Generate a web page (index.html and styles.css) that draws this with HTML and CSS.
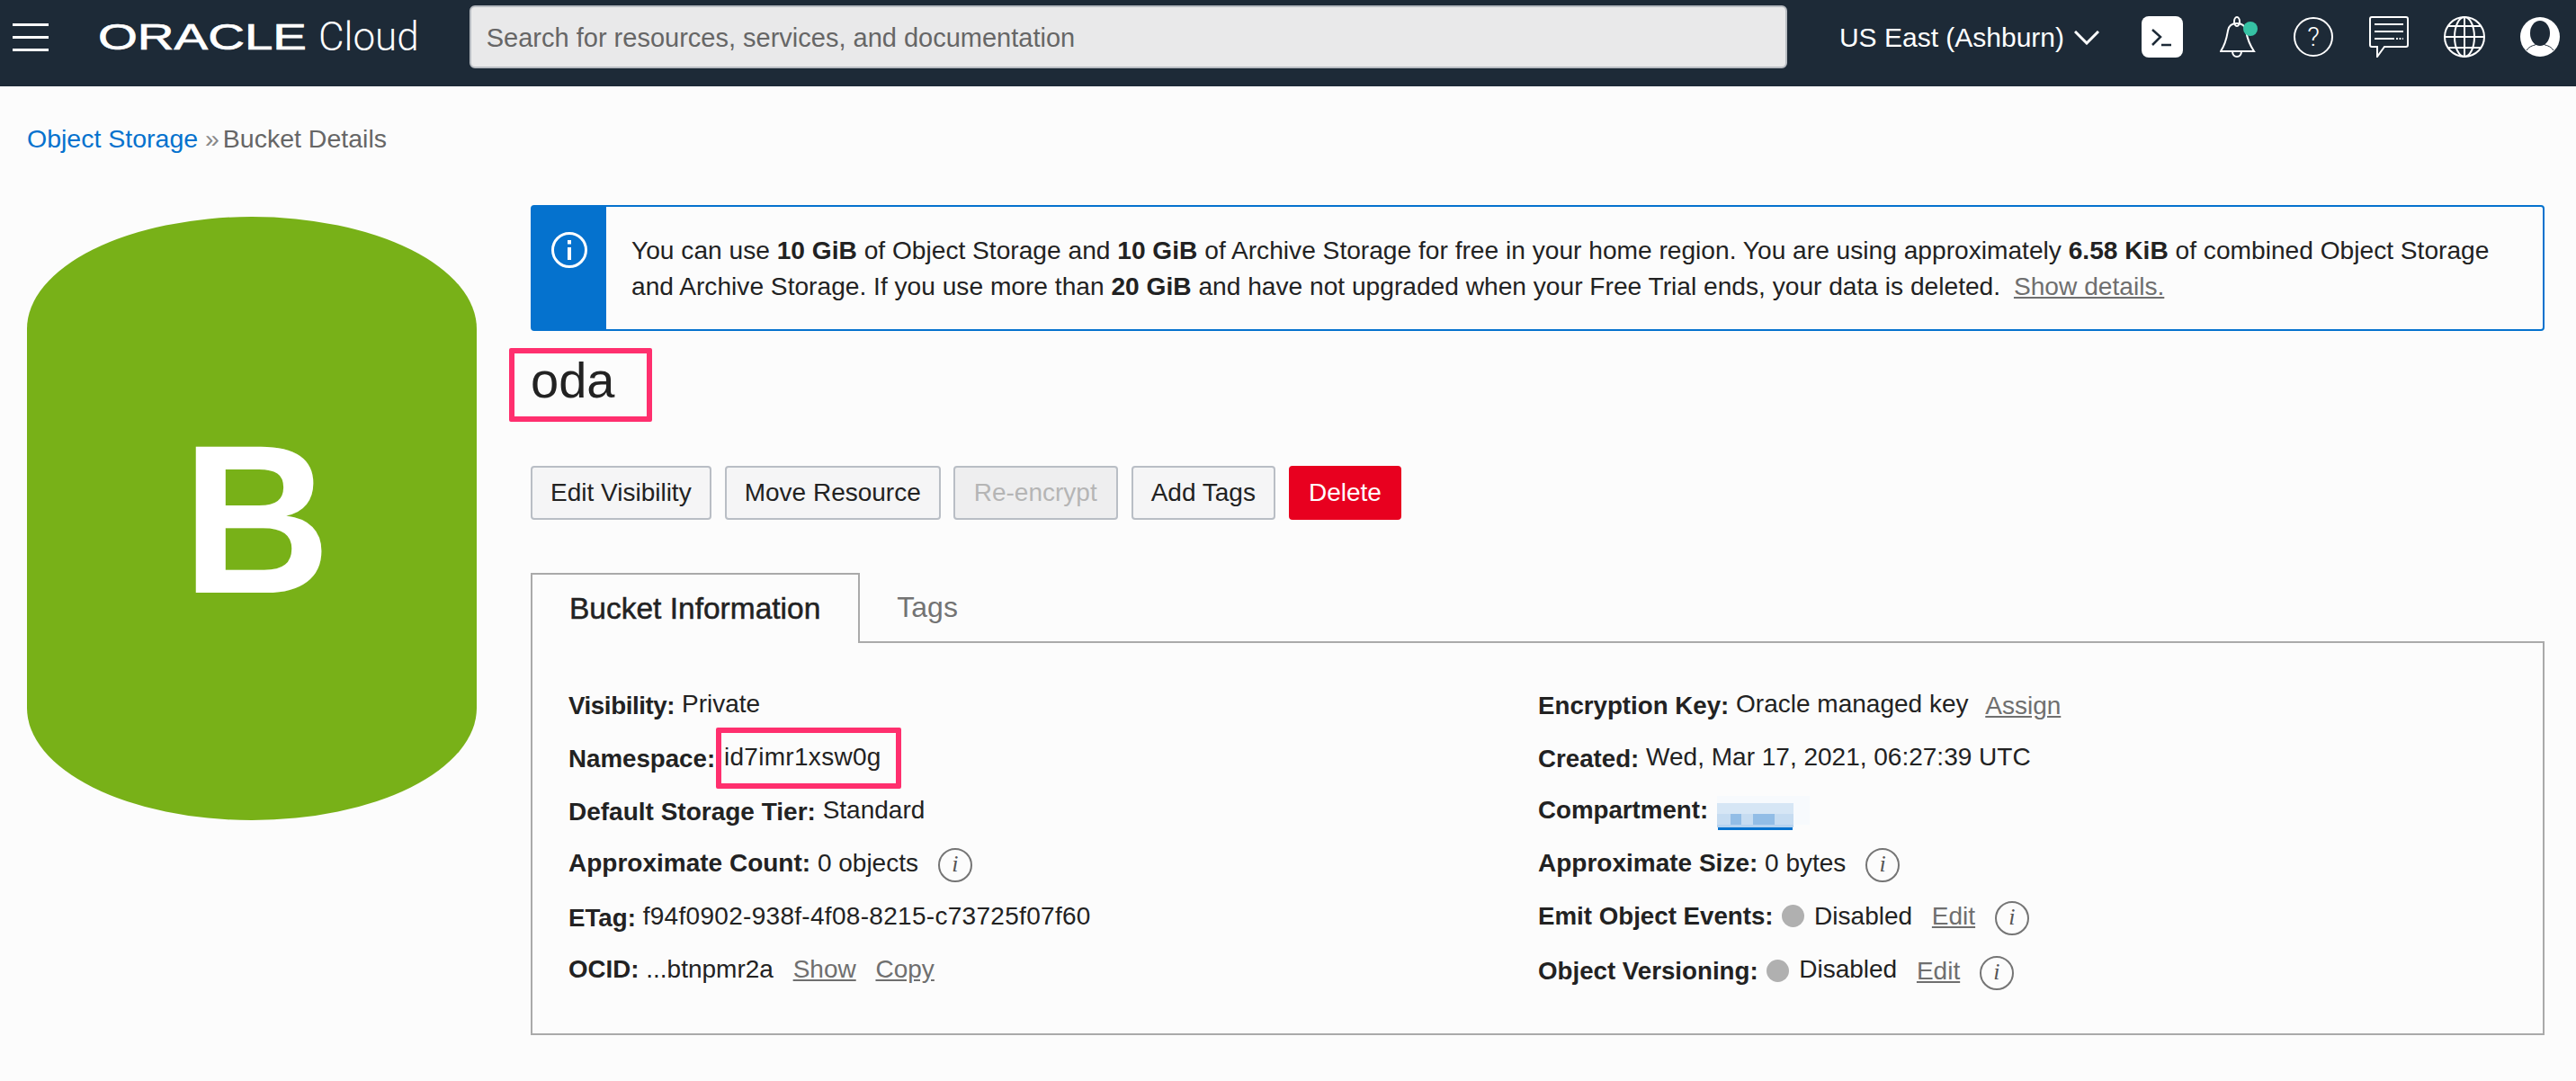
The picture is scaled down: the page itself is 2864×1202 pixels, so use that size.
FILE: index.html
```html
<!DOCTYPE html>
<html>
<head>
  <meta charset="UTF-8">
  <meta name="viewport" content="width=device-width, initial-scale=1.0">
  <title>Bucket Details</title>
  <link rel="stylesheet" href="styles.css">
</head>
<body>
  <!-- Top navigation -->
  <header class="topbar">
    <div class="burger"><span></span><span></span><span></span></div>
    <div class="brand"><span class="brand-oracle">ORACLE</span><span class="brand-cloud">Cloud</span></div>
    <div class="search">Search for resources, services, and documentation</div>
    <div class="region">US East (Ashburn)
      <svg class="chevron" width="28" height="16" viewBox="0 0 28 16"><path d="M1 1 L14 14 L27 1" fill="none" stroke="#fff" stroke-width="3"/></svg>
    </div>
    <svg class="nav-icon icon-term" width="46" height="46" viewBox="0 0 46 46">
      <rect width="46" height="46" rx="8" fill="#fff"/>
      <path d="M12 15 L21 23 L12 32 M22 32 H33" fill="none" stroke="#1d2a37" stroke-width="2.5"/>
    </svg>
    <svg class="nav-icon icon-bell" width="42" height="46" viewBox="0 0 42 46">
      <g fill="none" stroke="#fff" stroke-width="2">
        <ellipse cx="19" cy="6" rx="3" ry="5"/>
        <path d="M1 39 C7 30 8 22 9 16 C10 10 14 8 19 8 C24 8 28 10 29 16 C30 22 32 30 38 39 Z"/>
        <path d="M14 39 C14 47 24 47 24 39"/>
      </g>
      <ellipse cx="34" cy="14" rx="8" ry="8" fill="#36c2a4"/>
    </svg>
    <div class="nav-icon icon-help">?</div>
    <svg class="nav-icon icon-chat" width="44" height="46" viewBox="0 0 44 46">
      <path d="M3 1 H41 Q43 1 43 3 V32 Q43 34 41 34 H17 L9 45 V34 H3 Q1 34 1 32 V3 Q1 1 3 1 Z" fill="none" stroke="#fff" stroke-width="2"/>
      <path d="M6 9 H38 M6 17 H38 M6 25 H28" stroke="#fff" stroke-width="2"/>
      <path d="M30 25 H38" stroke="#fff" stroke-width="2" stroke-dasharray="2 1.5"/>
    </svg>
    <svg class="nav-icon icon-globe" width="46" height="46" viewBox="0 0 46 46">
      <g fill="none" stroke="#fff" stroke-width="2">
        <circle cx="23" cy="23" r="22"/>
        <ellipse cx="23" cy="23" rx="11" ry="22"/>
        <path d="M23 1 V45 M1 23 H45 M5 11 H41 M5 35 H41"/>
      </g>
    </svg>
    <svg class="nav-icon icon-user" width="44" height="46" viewBox="0 0 44 46">
      <ellipse cx="22" cy="23" rx="22" ry="22" fill="#fff"/>
      <ellipse cx="22" cy="19" rx="11" ry="14" fill="#1d2a37"/>
      <path d="M7 38 C11 32 16 33 18 31 M37 38 C33 32 28 33 26 31" fill="none" stroke="#1d2a37" stroke-width="1"/>
    </svg>
  </header>

  <main class="page">
    <div class="crumbs"><a class="crumb-link">Object Storage</a> <span class="crumb-sep">»</span> Bucket Details</div>

    <div class="detail">
      <div class="side">
        <div class="cylinder"><span class="cylinder-letter">B</span></div>
      </div>

      <div class="content">
        <div class="notice">
          <div class="notice-bar">
            <svg width="40" height="40" viewBox="0 0 40 40">
              <circle cx="20" cy="20" r="18.5" fill="none" stroke="#fff" stroke-width="3"/>
              <rect x="18" y="17" width="4" height="14" fill="#fff"/>
              <rect x="18" y="9" width="4" height="4.5" fill="#fff"/>
            </svg>
          </div>
          <div class="notice-text">
            <div>You can use <b>10 GiB</b> of Object Storage and <b>10 GiB</b> of Archive Storage for free in your home region. You are using approximately <b>6.58 KiB</b> of combined Object Storage</div>
            <div>and Archive Storage. If you use more than <b>20 GiB</b> and have not upgraded when your Free Trial ends, your data is deleted. <a class="link notice-link">Show details.</a></div>
          </div>
        </div>

        <h1 class="title"><span class="mark mark-title">oda</span></h1>

        <div class="actions">
          <button class="btn">Edit Visibility</button>
          <button class="btn">Move Resource</button>
          <button class="btn btn-off">Re-encrypt</button>
          <button class="btn">Add Tags</button>
          <button class="btn btn-danger">Delete</button>
        </div>

        <div class="tabs">
          <div class="tab tab-active">Bucket Information</div>
          <div class="tab">Tags</div>
        </div>

        <div class="panel">
          <div class="col">
            <div class="row"><b class="tight">Visibility:</b> <span class="up">Private</span></div>
            <div class="row"><b>Namespace:</b> <span class="up hex mark mark-ns">id7imr1xsw0g</span></div>
            <div class="row"><b class="full">Default Storage Tier:</b> <span class="up">Standard</span></div>
            <div class="row"><b class="full">Approximate Count:</b> 0 objects <span class="hint">i</span></div>
            <div class="row"><b>ETag:</b> <span class="up hex">f94f0902-938f-4f08-8215-c73725f07f60</span></div>
            <div class="row"><b>OCID:</b> ...btnpmr2a <a class="link">Show</a> <a class="link">Copy</a></div>
          </div>
          <div class="col">
            <div class="row"><b>Encryption Key:</b> <span class="up">Oracle managed key</span> <a class="link link-near">Assign</a></div>
            <div class="row"><b>Created:</b> <span class="up">Wed, Mar 17, 2021, 06:27:39 UTC</span></div>
            <div class="row"><b>Compartment:</b>
              <svg class="smudge" width="103" height="38" viewBox="0 0 103 38">
                <rect x="0" y="0" width="103" height="32" fill="#f7fafd"/>
                <rect x="0" y="8" width="85" height="12" fill="#d6e6f5"/>
                <rect x="0" y="20" width="85" height="12" fill="#c6dcf1"/>
                <rect x="15" y="20" width="12" height="12" fill="#92bde6"/>
                <rect x="40" y="20" width="24" height="12" fill="#92bde6"/>
                <rect x="0" y="32" width="85" height="3" fill="#b6d3ef"/>
                <rect x="1" y="35" width="83" height="3" fill="#0572ce"/>
              </svg>
            </div>
            <div class="row"><b class="full">Approximate Size:</b> 0 bytes <span class="hint">i</span></div>
            <div class="row"><b>Emit Object Events:</b> <span class="dot"></span> Disabled <a class="link">Edit</a> <span class="hint">i</span></div>
            <div class="row"><b>Object Versioning:</b> <span class="dot"></span> <span class="up">Disabled</span> <a class="link">Edit</a> <span class="hint">i</span></div>
          </div>
        </div>
      </div>
    </div>
  </main>
</body>
</html>
```

FILE: styles.css
```css
/* Page base */
body {
  margin: 0;
  background: #fcfcfc;
  color: #222;
  font-family: "Liberation Sans", Arial, sans-serif;
  font-size: 28px;
}

/* Top navigation */
.topbar {
  display: flex;
  align-items: center;
  box-sizing: border-box;
  height: 96px;
  padding: 0 18px 14px 14px;
  background: #1d2a37;
  color: #fff;
}
.burger {
  display: flex;
  flex-direction: column;
  gap: 11px;
  width: 40px;
  margin-right: 55px;
}
.burger span {
  height: 3px;
  background: #fff;
}
.brand {
  display: flex;
  align-items: center;
  width: 413px;
}
.brand-oracle {
  display: inline-block;
  width: 245px;
  font-size: 40px;
  -webkit-text-stroke: 0.7px #fff;
  transform: scaleX(1.41);
  transform-origin: left center;
}
.brand-cloud {
  font-family: Roboto, sans-serif;
  font-weight: 300;
  font-size: 44px;
}
.search {
  display: flex;
  align-items: center;
  box-sizing: border-box;
  width: 1466px;
  height: 70px;
  padding: 2px 0 0 17px;
  background: #e9e9ea;
  border: 2px solid #b8bcc2;
  border-radius: 6px;
  color: #666;
  font-size: 29px;
}
.region {
  display: flex;
  align-items: center;
  margin-left: 58px;
  padding-top: 2px;
  white-space: nowrap;
  font-size: 30px;
}
.chevron {
  margin-left: 11px;
}
.nav-icon {
  flex: none;
}
.icon-term { margin-left: 47px; }
.icon-bell { margin-left: 41px; }
.icon-help {
  box-sizing: border-box;
  width: 44px;
  height: 44px;
  margin-left: 40px;
  border: 2px solid #fff;
  border-radius: 50%;
  text-align: center;
  line-height: 40px;
  font-family: Roboto, sans-serif;
  font-weight: 300;
  font-size: 30px;
}
.icon-chat { margin-left: 40px; }
.icon-globe { margin-left: 39px; }
.icon-user { margin-left: 39px; }

/* Main area */
.page {
  padding: 38px 35px 0 30px;
}
.crumbs {
  line-height: 40px;
  color: #666;
  font-size: 28.5px;
}
.crumb-link {
  color: #0572ce;
}
.crumb-sep {
  margin-right: -4px;
  color: #888;
}
.detail {
  display: flex;
  gap: 60px;
  margin-top: 54px;
}
.side {
  flex: none;
  width: 500px;
  padding-top: 13px;
}
.cylinder {
  display: flex;
  align-items: center;
  justify-content: center;
  height: 671px;
  padding-left: 11px;
  box-sizing: border-box;
  background: #78b118;
  border-radius: 50% / 18.6%;
  color: #fff;
  font-size: 236px;
  font-weight: bold;
}
.cylinder-letter {
  transform: scaleX(0.97);
}
.content {
  flex: 1;
}

/* Free tier notice */
.notice {
  display: flex;
  box-sizing: border-box;
  height: 140px;
  border: 2px solid #0572ce;
  border-radius: 4px;
}
.notice-bar {
  display: flex;
  justify-content: center;
  flex: none;
  width: 82px;
  padding-top: 28px;
  box-sizing: border-box;
  background: #0572ce;
}
.notice-text {
  margin: 29px 20px 0 28px;
  line-height: 40px;
  font-size: 28.15px;
  white-space: nowrap;
}
.notice-link {
  margin-left: 7px;
}
.link {
  color: #6f6f6f;
  text-decoration: underline;
}

/* Title and buttons */
.title {
  margin: 20px 0 60px;
  line-height: 70px;
  font-size: 56px;
  font-weight: normal;
}
.mark {
  position: relative;
  display: inline-block;
}
.mark::after {
  content: "";
  position: absolute;
  border: 6px solid #ff2f6e;
  border-radius: 2px;
}
.mark-title::after {
  inset: -1px -42px -11px -24px;
}
.mark-ns {
  margin-left: 2px;
}
.mark-ns::after {
  inset: -3px -22px -6px -9px;
}
.actions {
  display: flex;
  gap: 15px;
}
.btn {
  height: 60px;
  padding: 0 20px;
  background: #f5f5f6;
  border: 2px solid #b9bec5;
  border-radius: 4px;
  color: #222;
  font-family: inherit;
  font-size: 28px;
}
.btn-off {
  margin-left: -1px;
  padding: 0 21px;
  background: #eeeeef;
  color: #b5b5b5;
}
.btn-danger {
  background: #e8001f;
  border-color: #e8001f;
  color: #fff;
}

/* Tabs */
.tabs {
  display: flex;
  margin-top: 59px;
  border-bottom: 2px solid #aaa;
}
.tab {
  padding: 0 41px;
  line-height: 76px;
  color: #737373;
  font-size: 32px;
}
.tab-active {
  margin-bottom: -2px;
  padding: 0 42px 0 41px;
  background: #fcfcfc;
  border: 2px solid #aaa;
  border-bottom: none;
  color: #222;
  font-size: 33.5px;
  -webkit-text-stroke: 0.5px #222;
}

/* Details panel */
.panel {
  display: grid;
  grid-template-columns: 1078px 1fr;
  padding: 38px 40px 42px;
  border: 2px solid #aaa;
  border-top: none;
}
.row {
  height: 59px;
  line-height: 59px;
  white-space: nowrap;
}
.row b {
  font-size: 27.7px;
}
.row b.full {
  font-size: 28px;
}
.row b.tight {
  letter-spacing: -0.4px;
}
.up {
  vertical-align: 2px;
}
.hex {
  letter-spacing: 0.3px;
}
.row .link {
  margin-left: 14px;
}
.row .link-near {
  margin-left: 11px;
}
.hint {
  display: inline-block;
  box-sizing: border-box;
  width: 38px;
  height: 38px;
  margin-left: 14px;
  vertical-align: middle;
  border: 2px solid #757575;
  border-radius: 50%;
  text-align: center;
  line-height: 32px;
  color: #555;
  font-family: "Liberation Serif", serif;
  font-style: italic;
  font-size: 26px;
}
.dot {
  display: inline-block;
  width: 25px;
  height: 25px;
  margin: 0 3px 0 2px;
  vertical-align: -3px;
  background: #b0b0b0;
  border-radius: 50%;
}
.smudge {
  margin-left: 2px;
  vertical-align: -13px;
}
```
